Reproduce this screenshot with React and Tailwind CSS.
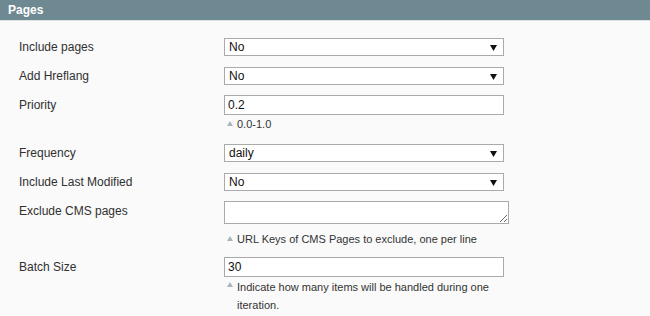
import React from 'react';

const Arrow = () => (
  <svg className="absolute right-[6px] top-[6px]" width="7" height="6" viewBox="0 0 7 6">
    <path d="M0 0h7L3.5 6z" fill="#111" />
  </svg>
);

const Hint = ({ children, className = '' }) => (
  <div className={`flex w-[280px] text-[11px] leading-[14px] text-[#333] ${className}`}>
    <svg className="mt-[4px] ml-[3px] mr-[4px] shrink-0" width="6" height="5" viewBox="0 0 6 5">
      <path d="M3 0L6 5H0z" fill="#a7b5bc" />
    </svg>
    <span>{children}</span>
  </div>
);

const Select = ({ value }) => (
  <div className="relative w-[280px] h-[18px] border border-[#aaa] bg-white">
    <span className="absolute left-[4px] top-[1px] text-[12px] leading-[14px] text-[#111]">{value}</span>
    <Arrow />
  </div>
);

const Input = ({ value }) => (
  <input
    readOnly
    value={value}
    className="block w-[280px] h-[20px] border border-[#aaa] bg-white px-[3px] text-[12px] text-[#111] outline-none"
  />
);

const Label = ({ children, h }) => (
  <div className={`w-[205px] shrink-0 flex items-center text-[12px] text-[#303030] ${h}`}>{children}</div>
);

const App = () => {
  return (
    <div className="w-[650px] h-[316px] overflow-hidden bg-[#fafafa]" style={{ fontFamily: '"Liberation Sans", Arial, sans-serif' }}>
      <div className="h-[21px] bg-[#6f8992] border-b border-[#dde3e5] px-[8px] flex items-center">
        <h4 className="text-[12px] font-bold text-white leading-none">Pages</h4>
      </div>

      <div className="pl-[19px] pt-[17px]">
        <div className="flex">
          <Label h="h-[18px]">Include pages</Label>
          <Select value="No" />
        </div>

        <div className="flex mt-[11px]">
          <Label h="h-[18px]">Add Hreflang</Label>
          <Select value="No" />
        </div>

        <div className="flex mt-[10px]">
          <Label h="h-[20px]">Priority</Label>
          <div>
            <Input value="0.2" />
            <Hint className="mt-[2px]">0.0-1.0</Hint>
          </div>
        </div>

        <div className="flex mt-[13px]">
          <Label h="h-[18px]">Frequency</Label>
          <Select value="daily" />
        </div>

        <div className="flex mt-[11px]">
          <Label h="h-[18px]">Include Last Modified</Label>
          <Select value="No" />
        </div>

        <div className="flex mt-[10px]">
          <Label h="h-[20px]">Exclude CMS pages</Label>
          <div>
            <textarea
              readOnly
              className="block w-[285px] h-[23px] border border-[#aaa] bg-white outline-none"
            />
            <Hint className="mt-[8px]">URL Keys of CMS Pages to exclude, one per line</Hint>
          </div>
        </div>

        <div className="flex mt-[11px]">
          <Label h="h-[20px]">Batch Size</Label>
          <div>
            <Input value="30" />
            <Hint className="mt-[1px] leading-[18px]">Indicate how many items will be handled during one iteration.</Hint>
          </div>
        </div>
      </div>
    </div>
  );
};

export default App;
